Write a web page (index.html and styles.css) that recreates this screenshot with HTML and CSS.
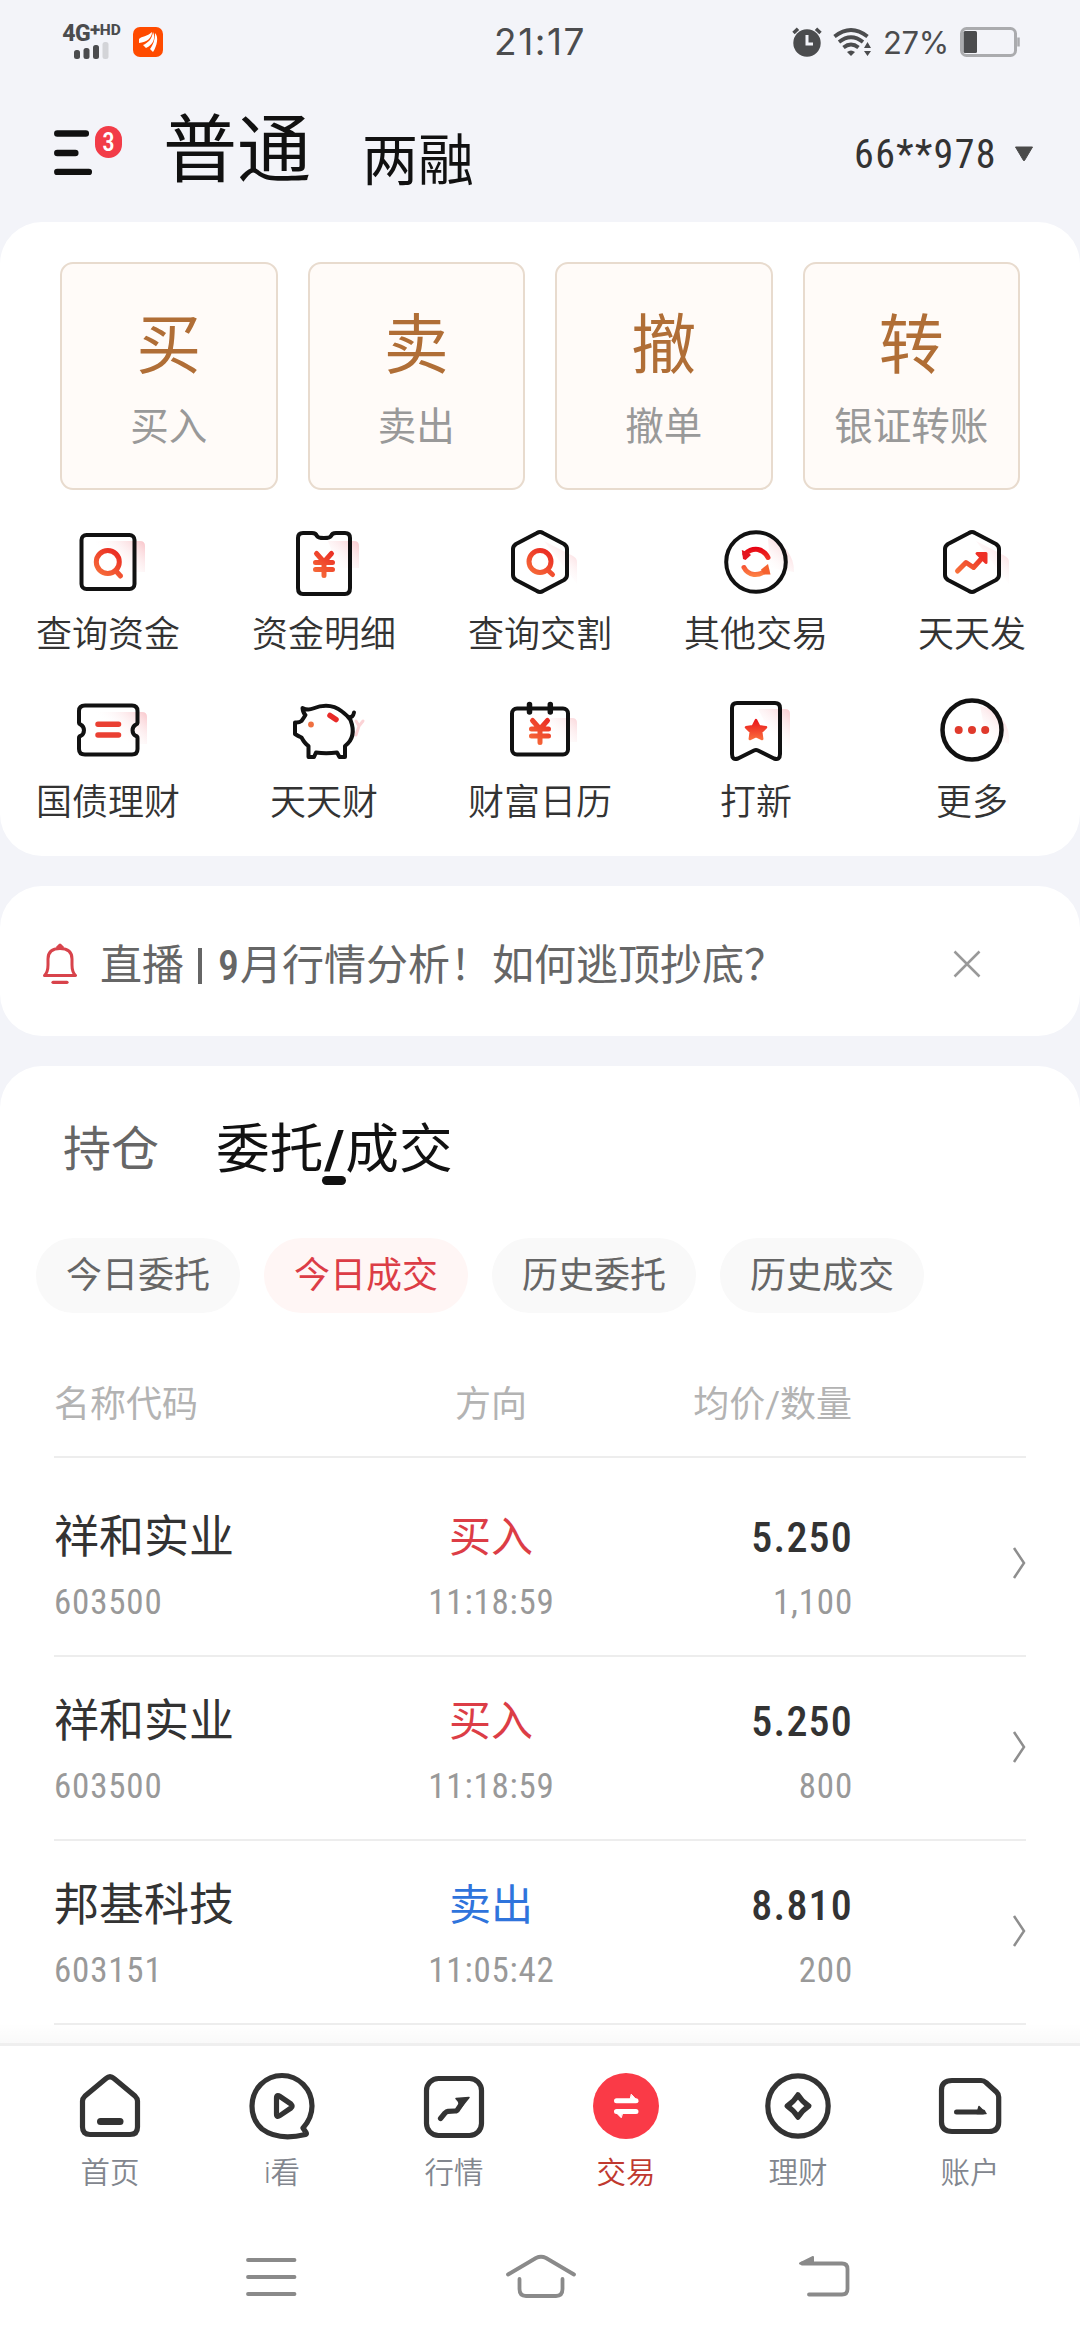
FILE: index.html
```html
<!DOCTYPE html>
<html lang="zh-CN">
<head>
<meta charset="utf-8">
<title>交易</title>
<link rel="stylesheet" href="styles.css">
</head>
<body>
<svg class="defs" width="0" height="0" aria-hidden="true">
  <defs>
    <linearGradient id="hot" gradientUnits="userSpaceOnUse" x1="48" y1="22" x2="26" y2="52">
      <stop offset="0" stop-color="#e8211f"/><stop offset="1" stop-color="#f8743c"/>
    </linearGradient>
    <linearGradient id="hotDown" gradientUnits="userSpaceOnUse" x1="0" y1="21" x2="0" y2="52">
      <stop offset="0" stop-color="#e60012"/><stop offset="1" stop-color="#ff8a48"/>
    </linearGradient>
    <linearGradient id="blush" gradientUnits="userSpaceOnUse" x1="72" y1="14" x2="46" y2="42">
      <stop offset="0" stop-color="#f9c4c9"/><stop offset="1" stop-color="#fff" stop-opacity="0"/>
    </linearGradient>
  </defs>
</svg>
<div class="screen">
  <header class="status">
    <div class="status-left">
      <div class="signal">
        <div class="net">4G<sup>+</sup><small>HD</small></div>
        <svg width="36" height="17" viewBox="0 0 36 17"><g fill="#4b4c4e"><rect x="0" y="8" width="6" height="9" rx="2.5"/><rect x="9.5" y="6" width="6" height="11" rx="2.5"/><rect x="19" y="3" width="6" height="14" rx="2.5"/></g><rect x="28.500" y="0" width="6" height="17" rx="2.500" fill="#d3d4d8"/></svg>
      </div>
      <svg class="app" width="30" height="30" viewBox="0 0 30 30"><rect width="30" height="30" rx="7" fill="#ff4b00"/><g fill="#fff"><path d="M6 12C9 9 14 10 19 5C19 11 14 15 6 16Z"/><path d="M10 18C15 16 19 12 20 5C23 11 20 18 13 21Z"/><path d="M22 6C26 10 24 19 20 25L17 22C20 18 22 13 22 6Z"/></g></svg>
    </div>
    <div class="clock">21:17</div>
    <div class="status-right">
      <svg width="30" height="30" viewBox="0 0 30 30"><circle cx="15" cy="16" r="13.700" fill="#4b4c4e"/><path d="M1.500 6L6 1.800M28.500 6L24 1.800" stroke="#4b4c4e" stroke-width="3.500"/><path d="M15 8v9h6" fill="none" stroke="#f3f4f9" stroke-width="3"/></svg>
      <svg class="wifi" width="40" height="28" viewBox="0 0 40 28"><g fill="none" stroke="#4b4c4e" stroke-width="3.800"><path d="M1.500 8.500Q18 -4.500 34.500 8.500"/><path d="M6 14Q18 4.500 30 14"/><path d="M10.500 19.500Q18 13.500 25.500 19.500"/></g><path d="M14 24q4-3 8 0l-4 4z" fill="#4b4c4e"/><path d="M34.500 14l3.500 6h-7zM34.500 28l3.500-5h-7z" fill="#4b4c4e"/></svg>
      <span class="percent">27%</span>
      <svg class="battery" width="60" height="30" viewBox="0 0 60 30"><rect x="1.500" y="1.500" width="54" height="27" rx="5" fill="none" stroke="#aaabae" stroke-width="3"/><rect x="3.500" y="4" width="13.500" height="22" rx="1.500" fill="#4b4c4e"/><path d="M58.500 10.500v9" stroke="#aaabae" stroke-width="2.500"/></svg>
    </div>
  </header>

  <nav class="top">
    <div class="menu">
      <svg width="40" height="48" viewBox="0 0 40 48"><path d="M3.300 6.500h28.500M3.300 26h18M3.300 45h31.500" stroke="#111" stroke-width="6.500" stroke-linecap="round"/></svg>
      <span class="badge">3</span>
    </div>
    <span class="mode on">普通</span>
    <span class="mode">两融</span>
    <span class="account">66**978</span>
    <svg class="caret" width="20" height="16" viewBox="0 0 20 16"><path d="M1.500 1h17L10.500 14.500Q10 15 9.500 14.500Z" fill="#4a4a4a" stroke="#4a4a4a" stroke-linejoin="round"/></svg>
  </nav>

  <section class="card actions">
    <div class="tiles">
      <div class="tile"><b>买</b><span>买入</span></div>
      <div class="tile"><b>卖</b><span>卖出</span></div>
      <div class="tile"><b>撤</b><span>撤单</span></div>
      <div class="tile"><b>转</b><span>银证转账</span></div>
    </div>
    <div class="grid">
      <div class="item">
        <svg class="ico" viewBox="0 0 72 72"><path d="M24 15H68q5 0 5 5V46H24Z" fill="url(#blush)"/><rect x="9.500" y="9" width="53" height="54" rx="5"/><g stroke="url(#hot)" stroke-width="5"><circle cx="35.800" cy="36" r="11.500"/><path d="M43.500 44.500l5 5.500"/></g></svg>
        <span>查询资金</span>
      </div>
      <div class="item">
        <svg class="ico" viewBox="0 0 72 72"><path d="M40 15H66q5 0 5 5V42H50Z" fill="url(#blush)"/><path d="M15 7H24Q28 7 29 10Q30 12 36 12Q42 12 43 10Q44 7 48 7H57Q62 7 62 12V62Q62 68 57 68H15Q10 68 10 62V12Q10 7 15 7Z"/><path d="M28.500 27.500L36 36L43.500 27.500M27.500 36.500H44.500M27.500 43.500H44.500M36 36V49.500" stroke="url(#hot)" stroke-width="5"/></svg>
        <span>资金明细</span>
      </div>
      <div class="item">
        <svg class="ico" viewBox="0 0 72 72"><path d="M40 15L69 30Q73 32 73 36V58Z" fill="url(#blush)"/><path d="M33 7Q36 5 39 7L60 18Q63 20 63 23V49Q63 52 60 54L39 65Q36 67 33 65L12 54Q9 52 9 49V23Q9 20 12 18Z"/><g stroke="url(#hot)" stroke-width="5"><circle cx="36" cy="35.500" r="11"/><path d="M43.500 44l5 4.500"/></g></svg>
        <span>查询交割</span>
      </div>
      <div class="item">
        <svg class="ico" viewBox="0 0 72 72"><path d="M48 12A34 34 0 0 1 74 46L50 42Z" fill="url(#blush)"/><circle cx="36" cy="36" r="29.800" stroke-width="4"/><g stroke="url(#hotDown)" stroke-width="5"><path d="M25 28Q31 22.500 38 23.500Q45 25 48 31.500"/><path d="M24 41.500Q27 47.500 34 48.500Q41 49 46 44"/></g><path d="M21.800 24L28 26.500L31 29L25.500 34L23 33Z" fill="#e41520"/><path d="M48 38L50.500 48.500H44L41 43.500Z" fill="#f5622f"/></svg>
        <span>其他交易</span>
      </div>
      <div class="item">
        <svg class="ico" viewBox="0 0 72 72"><path d="M40 15L69 30Q73 32 73 36V58Z" fill="url(#blush)"/><path d="M33 7Q36 5 39 7L60 18Q63 20 63 23V49Q63 52 60 54L39 65Q36 67 33 65L12 54Q9 52 9 49V23Q9 20 12 18Z"/><path d="M21.500 45L30 36.500L37.500 41.500L47 31" stroke="url(#hot)" stroke-width="5"/><path d="M41 27.500H50V36.500Z" fill="#ee3026" stroke="#ee3026" stroke-width="3"/></svg>
        <span>天天发</span>
      </div>
      <div class="item">
        <svg class="ico" viewBox="0 0 72 72"><path d="M22 18H70q5 0 5 5V50H30Z" fill="url(#blush)"/><path d="M13 11.500H60Q65.500 11.500 65.500 17V29Q65.500 30 64 30.500A6.500 6.500 0 0 0 64 42Q65.500 42.500 65.500 44V55Q65.500 60.500 60 60.500H13Q7 60.500 7 55V44Q7 42.500 8.500 42A6.500 6.500 0 0 0 8.500 30.500Q7 30 7 29V17Q7 11.500 13 11.500Z"/><path d="M26 30.300H46.500M26 41H46.500" stroke="#ea4033" stroke-width="5.500"/></svg>
        <span>国债理财</span>
      </div>
      <div class="item">
        <svg class="ico" viewBox="0 0 72 72"><path d="M68 27l3 5l4-5M71 32l-3 9" stroke="#fbd3d6" stroke-width="3"/><path d="M14.500 14Q20 16.500 25 14.500Q42 8 54 17.500Q60 22 62.500 26Q69 43 57 52V63H51.500L49 58.500Q38 60 28 58.500L26 63H20.500V52Q17 50 13.500 43.500Q10 42 7 40V28.500Q11 29 13.500 27Q15 25 17.500 21Q15 19 14.500 14Z" stroke-width="4"/><path d="M60.500 23Q65 24 66 18.500" stroke-width="4"/><circle cx="23" cy="30.500" r="2.900" fill="#ef7040" stroke="none"/><path d="M42 21.500L48 25.500" stroke="#e82a28" stroke-width="5.500"/></svg>
        <span>天天财</span>
      </div>
      <div class="item">
        <svg class="ico" viewBox="0 0 72 72"><path d="M40 24H68q5 0 5 5V48H50Z" fill="url(#blush)"/><rect x="8" y="14.500" width="56" height="46" rx="5"/><path d="M25.500 10.500V18M46.300 10.500V18" stroke-width="5.500"/><path d="M28.500 26.500L36 35L43.500 26.500M27.500 35H44.500M27.500 42H44.500M36 35V48.500" stroke="url(#hot)" stroke-width="5"/></svg>
        <span>财富日历</span>
      </div>
      <div class="item">
        <svg class="ico" viewBox="0 0 72 72"><path d="M38 15H65q5 0 5 5V56L52 42Z" fill="url(#blush)"/><path d="M17 9H55Q60 9 60 14V60Q60 66.500 54 64.500L38 56.500Q36 55.500 34 56.500L18 64.500Q12 66.500 12 60V14Q12 9 17 9Z"/><path d="M36 26L39.200 32.300L46 33.300L41.200 38L42.200 45L36 42L29.800 45L30.800 38L26 33.300L32.800 32.300Z" fill="url(#hotDown)" stroke="url(#hotDown)" stroke-width="2.500"/></svg>
        <span>打新</span>
      </div>
      <div class="item">
        <svg class="ico" viewBox="0 0 72 72"><path d="M44 12A34 34 0 0 1 73 50L50 42Z" fill="url(#blush)"/><circle cx="36" cy="36" r="29.500" stroke-width="4.500"/><g fill="#e03a2c" stroke="none"><circle cx="22.700" cy="36" r="4"/><circle cx="36" cy="36" r="4"/><circle cx="49.200" cy="36" r="4"/></g></svg>
        <span>更多</span>
      </div>
    </div>
  </section>

  <section class="card notice">
    <svg width="34" height="42" viewBox="0 0 34 42"><path d="M1.500 32.500Q5 29 5 22V16Q5 5.500 17 5.500Q29 5.500 29 16V22Q29 29 32.500 32.500ZM14 5L17 2L20 5" fill="none" stroke="#d8434b" stroke-width="3" stroke-linejoin="round"/><path d="M10 39.300h14" stroke="#d8434b" stroke-width="3.200" stroke-linecap="round"/></svg>
    <span class="notice-text">直播<i></i><em>9</em>月行情分析！如何逃顶抄底？</span>
    <svg class="close" width="28" height="28" viewBox="0 0 28 28"><path d="M1.500 1.500l25 25M26.500 1.500l-25 25" stroke="#999" stroke-width="2.500"/></svg>
  </section>

  <section class="card orders">
    <div class="tabs">
      <span class="tab">持仓</span>
      <span class="tab on">委托<b>/</b>成交</span>
    </div>
    <div class="pills">
      <span class="pill">今日委托</span>
      <span class="pill on">今日成交</span>
      <span class="pill">历史委托</span>
      <span class="pill">历史成交</span>
    </div>
    <div class="table">
      <div class="row head"><span>名称代码</span><span>方向</span><span>均价/数量</span></div>
      <div class="row first">
        <div class="cell"><strong>祥和实业</strong><small>603500</small></div>
        <div class="cell"><strong class="buy">买入</strong><small>11:18:59</small></div>
        <div class="cell"><strong class="num">5.250</strong><small>1,100</small></div>
        <svg class="go" width="14" height="32" viewBox="0 0 14 32"><path d="M2 1L12 16L2 31" fill="none" stroke="#8e8e8e" stroke-width="2.500"/></svg>
      </div>
      <div class="row">
        <div class="cell"><strong>祥和实业</strong><small>603500</small></div>
        <div class="cell"><strong class="buy">买入</strong><small>11:18:59</small></div>
        <div class="cell"><strong class="num">5.250</strong><small>800</small></div>
        <svg class="go" width="14" height="32" viewBox="0 0 14 32"><path d="M2 1L12 16L2 31" fill="none" stroke="#8e8e8e" stroke-width="2.500"/></svg>
      </div>
      <div class="row">
        <div class="cell"><strong>邦基科技</strong><small>603151</small></div>
        <div class="cell"><strong class="sell">卖出</strong><small>11:05:42</small></div>
        <div class="cell"><strong class="num">8.810</strong><small>200</small></div>
        <svg class="go" width="14" height="32" viewBox="0 0 14 32"><path d="M2 1L12 16L2 31" fill="none" stroke="#8e8e8e" stroke-width="2.500"/></svg>
      </div>
    </div>
    <div class="fade"></div>
  </section>

  <footer class="tabbar">
    <div class="tab-item"><svg class="ti" viewBox="0 0 72 72"><path d="M32 8.500Q36 5 40 8.500L61 26Q63.500 28.500 63.500 31V57Q63.500 64.500 56 64.500H16Q8.500 64.500 8.500 57V31Q8.500 28.500 11 26Z"/><path d="M26.500 51.600H46" stroke-width="7"/></svg><span>首页</span></div>
    <div class="tab-item"><svg class="ti" viewBox="0 0 72 72"><path d="M57 58Q66 48 66 36A30 30.500 0 1 0 6 36Q6 50 16 59Q32 71 59.500 64.500Q61 64 60 62.500Z"/><path d="M30.500 28V44Q30.500 48 34 45.500L45 38Q47 36 45 34L34 26.500Q30.500 24 30.500 28Z"/></svg><span>i看</span></div>
    <div class="tab-item"><svg class="ti" viewBox="0 0 72 72"><rect x="8.500" y="8.500" width="55" height="57" rx="12"/><path d="M22.500 48.500L27 43Q28.500 41.500 30 41.300L37 41Q39 41 40 39L44 33"/><path d="M38 28.500L51 27.500L42.500 38L40.500 31.500Z" fill="#333" stroke-width="1.500"/></svg><span>行情</span></div>
    <div class="tab-item on"><svg class="ti" viewBox="0 0 72 72"><circle cx="36" cy="36" r="33" fill="#fa3a47" stroke="none"/><path d="M26.500 30.700H46M26.500 41.500H46" stroke="#fff" stroke-width="5"/><path d="M41.500 24.500L48 31.500H40ZM31 47.500L24.500 41H33Z" fill="#fff" stroke="#fff" stroke-width="1"/></svg><span>交易</span></div>
    <div class="tab-item"><svg class="ti" viewBox="0 0 72 72"><circle cx="36" cy="36" r="30.200"/><path d="M36 24.800Q40 31.500 46.800 36Q40 40.500 36 47.200Q32 40.500 25.200 36Q32 31.500 36 24.800Z"/></svg><span>理财</span></div>
    <div class="tab-item"><svg class="ti" viewBox="0 0 72 72"><path d="M18 10.500H47Q50 10.500 52 12.500L62.500 22Q64.700 24 64.700 27V52Q64.700 61.500 55 61.500H18Q7.500 61.500 7.500 52V20Q7.500 10.500 18 10.500Z"/><path d="M22.500 42H49" stroke-width="5"/><path d="M45 36.500L52 43.500H43Z" fill="#333" stroke-width="1.500"/></svg><span>账户</span></div>
  </footer>

  <div class="softkeys">
    <svg viewBox="0 0 72 48"><path d="M14 7H60.500M14 24H60.500M14 41H60.500"/></svg>
    <svg viewBox="0 0 72 48"><path d="M4 21.500L32 5Q37 2.500 42 5L70 21.500M15.500 26V36Q15.500 43 22 43H52Q58.500 43 58.500 36V26"/></svg>
    <svg class="back" viewBox="0 0 72 48"><path d="M14 10.500H54Q59.500 10.500 59.500 16V36Q59.500 41.500 54 41.500H21"/><path d="M12 10.500L25 4V11Z" fill="#8a8a8a" stroke-width="2"/></svg>
  </div>
</div>
</body>
</html>
```
FILE: styles.css
```css
* { box-sizing: border-box; }
body {
  margin: 0;
  background: #f3f4f9;
  font-family: Roboto, "Noto Sans CJK SC", sans-serif;
  color: #333;
}
svg { display: block; flex: none; }
.defs { position: absolute; }
.screen {
  width: 1080px;
  height: 2340px;
  display: flex;
  flex-direction: column;
  overflow: hidden;
}

/* system status bar */
.status {
  height: 84px;
  flex: none;
  display: grid;
  grid-template-columns: 1fr auto 1fr;
  align-items: center;
  padding: 0 60px 0 60px;
  color: #4b4c4e;
}
.status-left { display: flex; align-items: center; gap: 10px; }
.signal { width: 63px; display: flex; flex-direction: column; align-items: center; }
.net { font-weight: 800; font-size: 23px; line-height: 16px; height: 16px; white-space: nowrap; letter-spacing: -.5px; }
.net sup { font-size: 19px; line-height: 0; vertical-align: 5px; }
.net small { font-size: 15.500px; vertical-align: 6px; line-height: 0; letter-spacing: 0; }
.clock { font: 400 37px/42px Inter, sans-serif; letter-spacing: 1.5px; }
.status-right { display: flex; align-items: center; justify-content: flex-end; }
.wifi { margin-left: 11px; }
.percent { font: 400 31px/40px Inter, sans-serif; padding-left: 10px; letter-spacing: -.3px; padding-top: 2px; }
.battery { margin-left: 11px; }

/* page header */
.top {
  height: 138px;
  flex: none;
  display: flex;
  align-items: center;
  padding: 0 46px 0 54px;
}
.menu { position: relative; width: 109px; height: 48px; margin-top: -5px; }
.badge {
  position: absolute;
  left: 41px;
  top: -1px;
  width: 27px;
  height: 32px;
  border-radius: 14px;
  background: #f23c48;
  color: #fff;
  font: 500 25px/33px "Roboto Condensed", Roboto, sans-serif;
  text-align: center;
}
.mode { font-size: 56px; line-height: 80px; color: #111; margin: 15px 0 0 51px; }
.mode.on { font-size: 74px; line-height: 100px; margin: -4px 0 0; }
.account { margin-left: auto; font: 450 40px/50px "Roboto Condensed", Roboto, sans-serif; letter-spacing: 1.400px; padding-top: 3px; }
.caret { margin-left: 17px; margin-top: 2px; }

.card { background: #fff; border-radius: 42px; flex: none; }

/* trade shortcuts */
.actions { height: 634px; padding-top: 40px; }
.tiles { display: grid; grid-template-columns: repeat(4, 1fr); gap: 30px; padding: 0 60px; }
.tile {
  height: 228px;
  border: 2px solid #e8dbce;
  border-radius: 13px;
  background: #fffbf8;
  display: flex;
  flex-direction: column;
  align-items: center;
}
.tile b { font-size: 65px; line-height: 80px; font-weight: 400; color: #b06e36; margin-top: 42px; }
.tile span { font-size: 38.500px; line-height: 50px; color: #999; margin-top: 16px; }
.grid { display: grid; grid-template-columns: repeat(5, 216px); row-gap: 18px; margin-top: 36px; }
.item { height: 150px; display: flex; flex-direction: column; align-items: center; }
.ico {
  width: 72px;
  height: 72px;
  overflow: visible;
  fill: none;
  stroke: #111;
  stroke-width: 4;
  stroke-linecap: round;
  stroke-linejoin: round;
}
.ico [fill="url(#blush)"] { stroke: none; }
.ico [fill^="#"]:not([stroke]) { stroke: none; }
.item span { font-size: 36px; line-height: 50px; margin-top: 12px; white-space: nowrap; font-weight: 350; }

/* announcement */
.notice { height: 150px; margin-top: 30px; display: flex; align-items: center; padding: 6px 99px 0 43px; }
.notice-text { font-size: 42px; line-height: 60px; color: #666; margin-left: 23px; padding-top: 4px; display: flex; align-items: center; white-space: nowrap; }
.notice-text i { width: 4px; height: 36px; background: #666; margin: 0 15px 0 14px; }
.notice-text em { font-style: normal; font-family: "Roboto Condensed", Roboto, sans-serif; font-weight: 500; padding: 0 1px; }
.close { margin-left: auto; }

/* orders */
.orders { position: relative; height: 977px; margin-top: 30px; border-radius: 42px 42px 0 0; overflow: hidden; }
.tabs { height: 172px; display: flex; padding-left: 63px; }
.tab { font-size: 48px; line-height: 60px; color: #666; margin-top: 54px; white-space: nowrap; }
.tab.on { font-size: 53.700px; color: #111; margin-left: 57px; }
.tab b { position: relative; padding: 0 1px; }
.tab b::after {
  content: "";
  position: absolute;
  left: 50%;
  bottom: -4px;
  width: 24px;
  height: 9px;
  margin-left: -12px;
  border-radius: 5px;
  background: #111;
}
.pills { display: flex; gap: 24px; padding-left: 36px; }
.pill { width: 204px; height: 75px; border-radius: 37.500px; background: #f9f9f9; color: #666; font-size: 36px; line-height: 76px; text-align: center; }
.pill.on { background: #fff6f5; color: #dc3d46; }
.table { padding: 0 54px; }
.row {
  height: 184px;
  border-bottom: 2px solid #ededed;
  display: grid;
  grid-template-columns: 272px 330px 196px 1fr;
  align-items: start;
  padding-top: 35px;
}
.row > :nth-child(2) { text-align: center; align-items: center; }
.row > :nth-child(3) { text-align: right; align-items: flex-end; }
.row.head { height: 145px; padding-top: 67px; font-size: 36px; line-height: 50px; color: #b3b3b3; }
.row.first { height: 199px; padding-top: 50px; }
.cell { display: flex; flex-direction: column; }
.cell strong { font-size: 45px; line-height: 60px; font-weight: 400; white-space: nowrap; }
.cell strong.buy, .cell strong.sell { font-size: 42px; }
.cell strong.num { font-family: "Roboto Condensed", Roboto, sans-serif; font-size: 42px; font-weight: 500; letter-spacing: 1.200px; margin-right: -1px; }
.cell small { font: 450 35px/40px "Roboto Condensed", Roboto, sans-serif; color: #999; margin-top: 15px; letter-spacing: .800px; margin-right: -1px; }
.buy { color: #dc3d46; }
.sell { color: #2f74dc; }
.go { justify-self: end; margin: 39px 0 0; }
.fade { position: absolute; left: 0; right: 0; bottom: 0; height: 20px; background: linear-gradient(rgba(0,0,0,0), rgba(0,0,0,.022)); }

/* bottom navigation */
.tabbar { height: 177px; flex: none; border-top: 3px solid #efefef; background: #fff; display: flex; padding: 24px 24px 0; }
.tab-item { width: 172px; display: flex; flex-direction: column; align-items: center; font-size: 29.500px; line-height: 40px; color: #82868e; }
.tab-item span { margin-top: 11px; font-weight: 350; }
.tab-item.on { color: #c0392f; }
.ti { width: 72px; height: 72px; fill: none; stroke: #333; stroke-width: 5.200; stroke-linecap: round; stroke-linejoin: round; }
.softkeys { flex: 1; background: #fff; display: flex; justify-content: space-between; padding: 33px 220px 0 234px; }
.softkeys svg { width: 72px; height: 48px; overflow: visible; fill: none; stroke: #8a8a8a; stroke-width: 3.800; stroke-linecap: round; stroke-linejoin: round; }
.softkeys .back { margin-left: 14px; }
```
